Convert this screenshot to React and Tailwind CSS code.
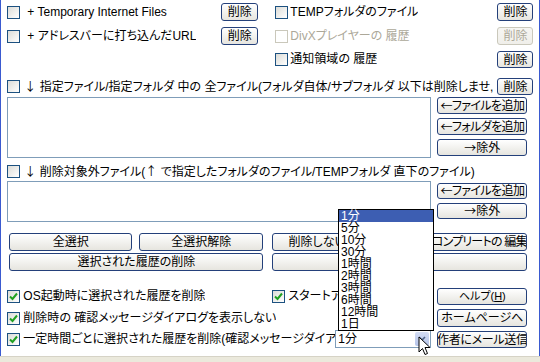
import React from "react";

const FONT =
  "font-['Liberation_Sans','Noto_Sans_CJK_JP',sans-serif] [font-feature-settings:'palt']";

// arrows look better in the CJK face (full-height like the original UI font)
function A({ c }) {
  return <span className="font-['Noto_Sans_CJK_JP',sans-serif]">{c}</span>;
}

function Check({ checked = false, disabled = false }) {
  return (
    <span
      className={`flex h-[13px] w-[13px] shrink-0 items-center justify-center border ${
        disabled
          ? "border-[#cac8bb] bg-white"
          : "border-[#1c5180] bg-linear-to-br from-[#dcdcd7] to-white"
      }`}
    >
      {checked && (
        <svg width="9" height="9" viewBox="0 0 9 9">
          <path d="M1 4.5 L3.5 7 L8 1.5" fill="none" stroke="#21a121" strokeWidth="2" />
        </svg>
      )}
    </span>
  );
}

function Btn({ children, className = "", disabled = false }) {
  return (
    <button
      className={`flex shrink-0 items-center justify-center overflow-hidden whitespace-nowrap rounded-[3px] border bg-linear-to-b leading-none ${
        disabled
          ? "border-[#cac8bb] from-[#f7f6f3] to-[#f0efea] text-[#aca899]"
          : "border-[#24407a] from-white to-[#e6e5df] text-black"
      } ${className}`}
    >
      {children}
    </button>
  );
}

function Row({ label, gap = "gap-[7px]", checked, disabled, className = "" }) {
  return (
    <div className={`flex min-w-0 items-center ${gap} ${className}`}>
      <Check checked={checked} disabled={disabled} />
      <span
        className={`overflow-hidden whitespace-nowrap leading-[15px] ${
          disabled ? "text-[#aca899]" : "text-black"
        }`}
      >
        {label}
      </span>
    </div>
  );
}

const minutes = ["1分", "5分", "10分", "30分", "1時間", "2時間", "3時間", "6時間", "12時間", "1日"];

export default function App() {
  return (
    <div className={`relative flex h-[362px] w-[540px] flex-col overflow-hidden bg-white text-[12px] ${FONT}`}>
      <div className="flex h-[356px]">
        <div className="w-[3px] bg-[#3a5ad0]" />
        <div className="flex flex-1 flex-col pl-[7px] pr-[5px] pt-[3px]">
          {/* top three rows */}
          <div className="flex h-[18px] items-center">
            <div className="flex w-[251px] items-center">
              <Row className="flex-1" label="+ Temporary Internet Files" />
              <Btn className="h-[18px] w-[37px]">削除</Btn>
            </div>
            <div className="ml-[17px] flex flex-1 items-center">
              <Row className="flex-1" gap="gap-[2px]" label="TEMPフォルダのファイル" />
              <Btn className="mr-[1px] h-[18px] w-[36px]">削除</Btn>
            </div>
          </div>
          <div className="mt-[6px] flex h-[18px] items-center">
            <div className="flex w-[251px] items-center">
              <Row className="flex-1" label="+ アドレスバーに打ち込んだURL" />
              <Btn className="h-[18px] w-[37px]">削除</Btn>
            </div>
            <div className="ml-[17px] flex flex-1 items-center">
              <Row className="flex-1" gap="gap-[2px]" disabled label="DivXプレイヤーの 履歴" />
              <Btn disabled className="mr-[1px] h-[18px] w-[36px]">削除</Btn>
            </div>
          </div>
          <div className="mt-[6px] flex h-[17px] items-center">
            <div className="w-[251px]" />
            <div className="ml-[17px] flex flex-1 items-center">
              <Row className="flex-1" gap="gap-[2px]" label="通知領域の 履歴" />
              <Btn className="mr-[1px] h-[17px] w-[36px]">削除</Btn>
            </div>
          </div>

          {/* include list */}
          <div className="mt-[10px] flex h-[17px] items-center">
            <Row
              className="flex-1"
              gap="gap-[4px]"
              label={
                <>
                  <A c="↓" /> 指定ファイル/指定フォルダ 中の 全ファイル(フォルダ自体/サブフォルダ 以下は削除しませ,
                </>
              }
            />
            <Btn className="ml-[4px] mr-[1px] h-[17px] w-[36px]">削除</Btn>
          </div>
          <div className="mt-[2px] flex">
            <div className="h-[61px] w-[424px] border border-[#7f9db9] bg-white" />
            <div className="ml-[6px] flex w-[90px] flex-col gap-[4px]">
              <Btn className="h-[17px] w-[90px] tracking-[-0.6px]"><A c="←" />ファイルを追加</Btn>
              <Btn className="h-[17px] w-[90px] tracking-[-0.6px]"><A c="←" />フォルダを追加</Btn>
              <Btn className="h-[17px] w-[90px]"><A c="→" />除外</Btn>
            </div>
          </div>

          {/* exclude list */}
          <div className="mt-[6px] flex h-[14px] items-center">
            <Row
              gap="gap-[4px]"
              label={
                <>
                  <A c="↓" /> 削除対象外ファイル(<A c="↑" /> で指定したフォルダのファイル/TEMPフォルダ 直下のファイル)
                </>
              }
            />
          </div>
          <div className="mt-[3px] flex">
            <div className="h-[41px] w-[424px] border border-[#7f9db9] bg-white" />
            <div className="ml-[6px] flex w-[90px] flex-col gap-[4px] pt-[2px]">
              <Btn className="h-[16px] w-[90px] tracking-[-0.6px]"><A c="←" />ファイルを追加</Btn>
              <Btn className="h-[16px] w-[90px]"><A c="→" />除外</Btn>
            </div>
          </div>

          {/* action buttons */}
          <div className="mt-[11px] flex h-[18px] pl-[2px]">
            <Btn className="h-[18px] w-[123px]">全選択</Btn>
            <Btn className="ml-[7px] h-[18px] w-[124px]">全選択解除</Btn>
            <Btn className="ml-[9px] h-[18px] w-[155px]">削除しないリストの編集</Btn>
            <Btn className="ml-[4px] h-[18px] w-[96px] tracking-[-0.8px]">コンプリートの 編集</Btn>
          </div>
          <div className="mt-[2px] flex h-[18px] pl-[2px]">
            <Btn className="h-[18px] w-[254px]">選択された履歴の削除</Btn>
            <Btn className="ml-[9px] h-[18px] w-[255px]">最小化</Btn>
          </div>

          {/* options */}
          <div className="mt-[17px] flex">
            <div className="flex w-[424px] flex-col overflow-hidden">
              <div className="flex h-[17px] items-center">
                <Row className="w-[265px]" gap="gap-[3px]" checked label="OS起動時に選択された履歴を削除" />
                <Row className="flex-1" gap="gap-[3px]" checked label="スタートアップ時に最小化して起動" />
              </div>
              <div className="mt-[5px] flex h-[17px] items-center">
                <Row gap="gap-[3px]" checked label="削除時の 確認メッセージダイアログを表示しない" />
              </div>
              <div className="mt-[3px] flex h-[18px] items-center">
                <Row
                  className="w-[328px]"
                  gap="gap-[3px]"
                  checked
                  label="一定時間ごとに選択された履歴を削除(確認メッセージダイアログを表示しない)"
                />
                <div className="flex h-[18px] w-[96px] items-center border border-[#7f9db9] bg-white">
                  <span className="flex-1 pl-[2px] leading-none">1分</span>
                  <span className="mr-[1px] flex h-[14px] w-[14px] items-center justify-center rounded-[2px] bg-linear-to-b from-[#d3dcf3] to-[#b6c5ea]">
                    <svg width="8" height="6" viewBox="0 0 8 6">
                      <path d="M1 1 L4 4 L7 1" fill="none" stroke="#4d6185" strokeWidth="1.6" />
                    </svg>
                  </span>
                </div>
              </div>
            </div>
            <div className="ml-[6px] flex w-[90px] flex-col gap-[4px]">
              <Btn className="h-[17px] w-[90px] text-[11px]">ヘルプ(<span className="underline">H</span>)</Btn>
              <Btn className="h-[18px] w-[90px]">ホームページへ</Btn>
              <Btn className="h-[17px] w-[90px] tracking-[-0.3px]">作者にメール送信</Btn>
            </div>
          </div>
        </div>
        <div className="w-[5px] bg-[#3a5ad0]" />
      </div>
      <div className="h-[6px] border-t border-[#d6d3c6] bg-[#ebe9dc]" />

      {/* dropdown list of the interval combobox */}
      <div className="absolute left-[338px] top-[209px] flex w-[96px] flex-col border border-black bg-white">
        {minutes.map((m, i) => (
          <div
            key={m}
            className={`h-[12px] pl-[2px] leading-[12px] ${i === 0 ? "bg-[#3d5eb2] text-white" : "text-black"}`}
          >
            {m}
          </div>
        ))}
      </div>

      {/* mouse cursor */}
      <svg className="absolute left-[418px] top-[336px]" width="13" height="20" viewBox="0 0 13 20">
        <path
          d="M1 1 L1 16 L4.5 12.5 L7 18.5 L9.5 17.5 L7 11.5 L12 11.5 Z"
          fill="white"
          stroke="black"
          strokeWidth="1"
        />
      </svg>
    </div>
  );
}
